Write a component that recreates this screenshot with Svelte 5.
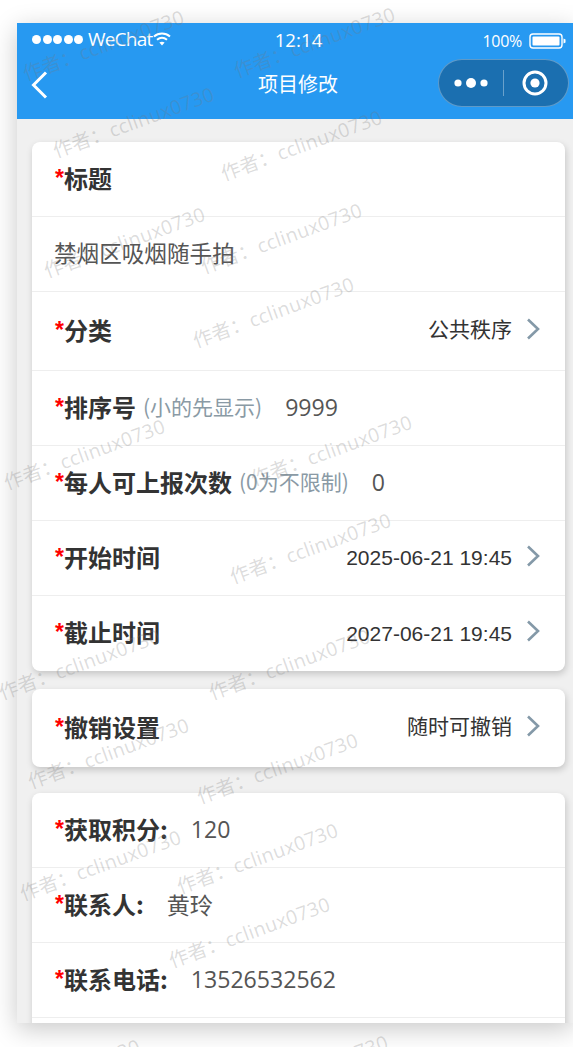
<script lang="ts">
  // left-centre anchor of each rotated watermark
  const marks = [
    [23, 73], [234, 70], [53, 150], [221, 173], [44, 270], [201, 266], [193, 340],
    [4, 482], [251, 478], [230, 576], [-1, 692], [209, 692], [28, 781], [197, 796],
    [20, 893], [177, 886], [169, 960], [-21, 1102], [227, 1098]
  ]
</script>

<div class="screen">
  <div class="phone">
    <header class="top">
      <div class="status">
        <div class="carrier">
          <span class="dots"><i></i><i></i><i></i><i></i><i></i></span>
          <span>WeChat</span>
          <svg class="wifi" width="18" height="14" viewBox="0 0 18 14">
            <path d="M1 4.6C5.6.6 12.4.6 17 4.6" fill="none" stroke="#fff" stroke-width="2" />
            <path d="M4 7.8c3-2.5 7-2.5 10 0" fill="none" stroke="#fff" stroke-width="2" />
            <path d="M6.4 10.6c1.6-1.2 3.6-1.2 5.2 0L9 13.4z" fill="#fff" />
          </svg>
        </div>
        <div class="time">12:14</div>
        <div class="power">
          <span>100%</span>
          <svg width="37" height="16" viewBox="0 0 37 16">
            <rect x="1" y="1" width="32" height="14" rx="3" fill="none" stroke="#fff" stroke-width="1.4" />
            <rect x="3.5" y="3.5" width="27" height="9" rx="1" fill="#fff" />
            <path d="M34.5 5.5l2 1v3l-2 1z" fill="#fff" />
          </svg>
        </div>
      </div>
      <nav class="bar">
        <svg class="back" width="18" height="28" viewBox="0 0 18 28">
          <path d="M15 1.5L2.5 14 15 26.5" fill="none" stroke="#fff" stroke-width="3" />
        </svg>
        <h1>项目修改</h1>
        <div class="capsule">
          <svg width="131" height="46" viewBox="0 0 131 46">
            <circle cx="20" cy="23" r="3.6" fill="#fff" />
            <circle cx="33" cy="23" r="5" fill="#fff" />
            <circle cx="46" cy="23" r="3.6" fill="#fff" />
            <path d="M65.5 10v26" stroke="rgba(255,255,255,.35)" />
            <circle cx="97" cy="23" r="11" fill="none" stroke="#fff" stroke-width="3" />
            <circle cx="97" cy="23" r="4.6" fill="#fff" />
          </svg>
        </div>
      </nav>
    </header>

    <main class="content">
      <section class="card">
        <div class="row h75"><span class="label"><b>*</b>标题</span></div>
        <div class="row h75"><span class="text">禁烟区吸烟随手拍</span></div>
        <div class="row h79 pick">
          <span class="label"><b>*</b>分类</span>
          <span class="choice">公共秩序</span>
          {@render chevron()}
        </div>
        <div class="row h75">
          <span class="label"><b>*</b>排序号</span>
          <span class="hint">(小的先显示)</span>
          <span class="num">9999</span>
        </div>
        <div class="row h75">
          <span class="label"><b>*</b>每人可上报次数</span>
          <span class="hint">(0为不限制)</span>
          <span class="num">0</span>
        </div>
        <div class="row h75 pick">
          <span class="label"><b>*</b>开始时间</span>
          <span class="date">2025-06-21 19:45</span>
          {@render chevron()}
        </div>
        <div class="row h75 pick last">
          <span class="label"><b>*</b>截止时间</span>
          <span class="date">2027-06-21 19:45</span>
          {@render chevron()}
        </div>
      </section>

      <section class="card">
        <div class="row h78 pick last">
          <span class="label"><b>*</b>撤销设置</span>
          <span class="choice">随时可撤销</span>
          {@render chevron()}
        </div>
      </section>

      <section class="card">
        <div class="row h75">
          <span class="label"><b>*</b>获取积分:</span>
          <span class="num wide">120</span>
        </div>
        <div class="row h75">
          <span class="label"><b>*</b>联系人:</span>
          <span class="num wide">黄玲</span>
        </div>
        <div class="row h75">
          <span class="label"><b>*</b>联系电话:</span>
          <span class="num wide">13526532562</span>
        </div>
        <div class="row h75"></div>
      </section>
    </main>
  </div>

  <div class="watermarks" aria-hidden="true">
    {#each marks as [x, y]}
      <span class="mark" style="left:{x}px;top:{y}px">作者： cclinux0730</span>
    {/each}
  </div>
</div>

{#snippet chevron()}
  <svg class="chevron" width="14" height="22" viewBox="0 0 14 22">
    <path d="M2 1.5L12 11 2 20.5" fill="none" stroke="#8499a8" stroke-width="2.6" />
  </svg>
{/snippet}

<style>
  .screen {
    position: relative;
    height: 1047px;
    box-sizing: border-box;
    padding: 23px 0 0 17px;
    background: #fff;
    overflow: hidden;
  }

  .phone {
    height: 1000px;
    background: #f0f0f0;
    box-shadow: 0 6px 24px rgba(0, 0, 0, 0.22);
    overflow: hidden;
    font-family: 'Noto Sans CJK SC', sans-serif;
  }

  .top {
    height: 96px;
    background: #2799f1;
    color: #fff;
  }

  .status {
    display: grid;
    grid-template-columns: 1fr auto 1fr;
    align-items: center;
    height: 32px;
    padding: 0 7px 0 15px;
    font-family: 'Open Sans', sans-serif;
  }

  .carrier {
    display: flex;
    align-items: center;
    font-size: 19px;
    letter-spacing: -0.8px;
  }

  .dots {
    display: flex;
    gap: 1.5px;
    margin-right: 5px;
  }

  .dots i {
    width: 9px;
    height: 9px;
    border-radius: 50%;
    background: #fff;
  }

  .wifi {
    margin-left: 1px;
  }

  .time {
    font-size: 18.7px;
    margin-left: -1px;
  }

  .power {
    display: flex;
    justify-content: flex-end;
    align-items: center;
    gap: 7px;
    padding-top: 3px;
    font-size: 16px;
    letter-spacing: -0.3px;
  }

  .bar {
    position: relative;
    display: flex;
    align-items: center;
    justify-content: space-between;
    height: 64px;
    padding: 0 4px 8px 14px;
    box-sizing: border-box;
  }

  .back {
    margin-top: 3px;
  }

  .bar h1 {
    position: absolute;
    left: 0;
    width: 562px;
    margin: 0;
    text-align: center;
    font-size: 20px;
    font-weight: 400;
  }

  .capsule {
    height: 46px;
    width: 129px;
    border: 1px solid rgba(255, 255, 255, 0.3);
    border-radius: 24px;
    background: #1b6fb0;
    overflow: hidden;
  }

  .capsule svg {
    display: block;
    margin-left: -1px;
  }

  .content {
    display: flex;
    flex-direction: column;
    padding: 23px 8px 0 15px;
  }

  .card {
    flex-shrink: 0;
    background: #fff;
    border-radius: 8px;
    box-shadow: 1px 3px 7px rgba(0, 0, 0, 0.18);
    margin-bottom: 18px;
  }

  .card:nth-child(2) {
    margin-bottom: 26px;
  }

  .row {
    display: flex;
    align-items: center;
    box-sizing: border-box;
    padding: 0 25px 4px 22px;
    border-bottom: 1px solid #eee;
    color: #333;
  }

  .row.last {
    border-bottom: 0;
  }

  .h75 { height: 75px; }
  .h78 { height: 78px; }
  .h79 { height: 79px; }

  .label {
    font-size: 24px;
    font-weight: 700;
    color: #333;
  }

  .label b {
    margin-left: 1px;
    font-family: 'Liberation Sans', sans-serif;
    font-weight: 700;
    font-size: 23px;
    line-height: 0;
    vertical-align: 2px;
    color: #f00;
  }

  .text {
    font-size: 22.6px;
    color: #555;
  }

  .hint {
    margin-left: 7px;
    font-size: 21px;
    color: #8a9aa5;
  }

  .num {
    margin: 2px 0 0 23px;
    font-family: 'Open Sans', 'Noto Sans CJK SC', sans-serif;
    font-size: 23.1px;
    color: #555;
  }

  .num.wide {
    margin-left: 23px;
  }

  .pick .label {
    margin-right: auto;
  }

  .choice {
    margin-bottom: 2px;
    font-size: 21px;
    color: #333;
  }

  .date {
    margin-top: 4px;
    font-family: 'Liberation Sans', sans-serif;
    font-size: 21px;
    color: #333;
  }

  .chevron {
    margin-left: 14px;
    margin-top: -1px;
  }

  .watermarks {
    position: absolute;
    inset: 0;
    overflow: hidden;
    pointer-events: none;
  }

  .mark {
    position: absolute;
    transform: translateY(-50%) rotate(-20deg);
    transform-origin: 0 50%;
    white-space: nowrap;
    font-family: 'Open Sans', 'Noto Sans CJK SC', sans-serif;
    font-size: 19.4px;
    letter-spacing: 0.35px;
    word-spacing: -5px;
    color: rgba(120, 120, 120, 0.26);
  }
</style>
